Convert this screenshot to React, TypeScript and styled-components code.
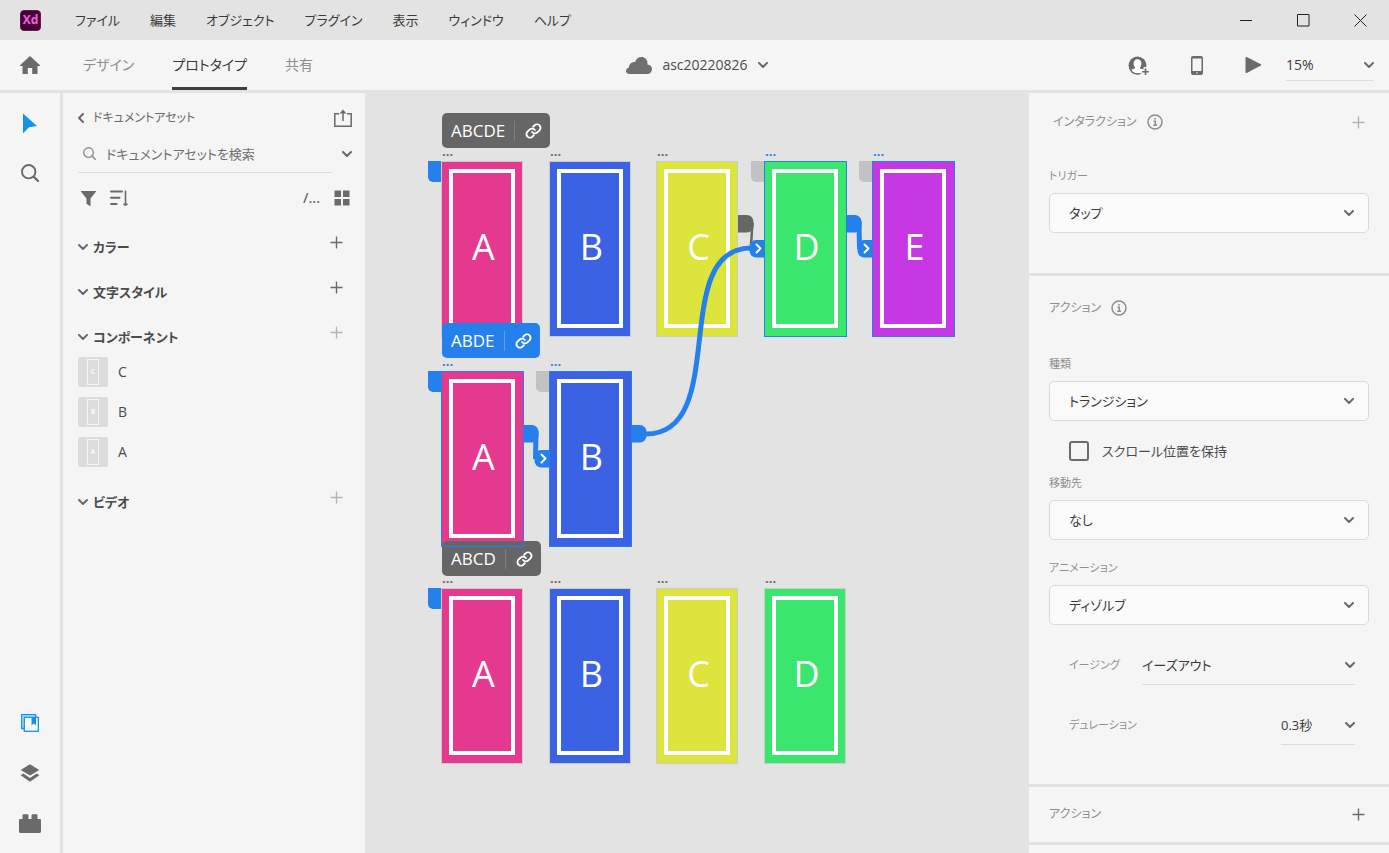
import React from "react";
import styled, { createGlobalStyle, css } from "styled-components";

const color = {
  frame: "#e3e3e3",
  panel: "#f5f5f5",
  line: "#e1e1e1",
  text: "#4b4b4b",
  strong: "#3a3a3a",
  muted: "#8e8e8e",
  faint: "#b3b3b3",
  icon: "#6a6a6a",
  blue: "#2680eb",
  pink: "#e4398f",
  royal: "#3a62e3",
  yellow: "#dde43c",
  green: "#3be66f",
  purple: "#c538e3",
};

const GlobalStyle = createGlobalStyle`
  *, *::before, *::after { box-sizing: border-box; }
  body {
    margin: 0;
    background: ${color.frame};
    color: ${color.text};
    font-family: "Open Sans", "Noto Sans CJK JP", sans-serif;
    font-feature-settings: "palt";
    font-size: 13px;
    line-height: 20px;
  }
  button, input, select {
    font: inherit;
    font-feature-settings: inherit;
    color: inherit;
    margin: 0;
  }
  button {
    display: inline-flex;
    align-items: center;
    justify-content: center;
    padding: 0;
    border: 0;
    background: none;
  }
  svg { display: block; flex: none; }
`;

/* ---------- shell ---------- */

const Shell = styled.div`
  display: flex;
  flex-direction: column;
  min-height: 100vh;
`;

const TitleBar = styled.header`
  display: flex;
  align-items: center;
  height: 40px;
  padding-left: 20px;
`;

const Logo = styled.div`
  display: flex;
  align-items: center;
  justify-content: center;
  width: 21px;
  height: 21px;
  border: 1px solid #6b1458;
  border-radius: 4px;
  background: #450135;
  color: #f45fe8;
  font-size: 12px;
  font-weight: 700;
  line-height: 16px;
`;

const Menu = styled.nav`
  display: flex;
  flex: 1;
  gap: 30px;
  margin-left: 34px;
  color: ${color.strong};
`;

const WindowButton = styled.button`
  width: 57px;
  height: 40px;
`;

const ToolBar = styled.div`
  display: grid;
  grid-template-columns: 1fr auto 1fr;
  height: 50px;
  margin-bottom: 3px;
  padding: 0 15px 0 20px;
  background: ${color.panel};
`;

const ToolGroup = styled.div<{ $end?: boolean; $gap: number }>`
  display: flex;
  align-items: center;
  justify-content: ${(p) => (p.$end ? "flex-end" : "flex-start")};
  gap: ${(p) => p.$gap}px;
`;

const Tab = styled.button<{ $active?: boolean }>`
  height: 50px;
  border-bottom: 3px solid ${(p) => (p.$active ? "#404040" : "transparent")};
  border-top: 3px solid transparent;
  color: ${(p) => (p.$active ? color.strong : color.muted)};
  font-size: 14px;
`;

const DocButton = styled.button`
  gap: 10px;
  color: ${color.text};
  font-size: 14px;
`;

const SelectWrap = styled.div`
  display: grid;
  align-items: center;
  flex: 1;
  > * { grid-area: 1 / 1; }
  > svg { justify-self: end; pointer-events: none; }
`;

const selectBase = css`
  width: 100%;
  height: 40px;
  appearance: none;
  border-radius: 0;
  background: transparent;
  color: ${color.strong};
`;

const BoxSelect = styled.select`
  ${selectBase}
  padding: 0 40px 0 19px;
  border: 1px solid #dadada;
  border-radius: 5px;
  background: #fafafa;
  & + svg { margin-right: 15px; }
`;

const LineSelect = styled.select`
  ${selectBase}
  padding: 0;
  border: 0;
  border-bottom: 1px solid #dcdcdc;
`;

const ZoomBox = styled.div`
  display: flex;
  width: 88px;
  height: 32px;
  font-size: 14px;
  select { height: 32px; }
`;

const Body = styled.div`
  display: flex;
  flex: 1;
`;

/* ---------- left side ---------- */

const Rail = styled.nav`
  display: flex;
  flex-direction: column;
  justify-content: space-between;
  width: 63px;
  padding: 5px 0;
  border-right: 3px solid ${color.line};
  background: ${color.panel};
  color: ${color.icon};
`;

const RailButton = styled.button`
  display: flex;
  width: 60px;
  height: 50px;
`;

const Assets = styled.aside`
  width: 303px;
  padding: 7px 13px 0 15px;
  border-right: 1px solid ${color.line};
  background: ${color.panel};
`;

const AssetRow = styled.div<{ $h: number }>`
  display: flex;
  align-items: center;
  justify-content: space-between;
  height: ${(p) => p.$h}px;
`;

const BackButton = styled.button`
  gap: 9px;
  color: ${color.icon};
  font-size: 12px;
`;

const SearchBox = styled.label`
  display: flex;
  align-items: center;
  gap: 10px;
  width: 254px;
  height: 38px;
  padding-left: 5px;
  border-bottom: 1px solid #dcdcdc;
  color: ${color.muted};
  input {
    flex: 1;
    min-width: 0;
    padding: 0;
    border: 0;
    outline: 0;
    background: transparent;
  }
  input::placeholder { color: #6e6e6e; opacity: 1; }
`;

const IconSet = styled.div`
  display: flex;
  align-items: center;
  gap: 14px;
  padding: 0 2px 0 3px;
  color: ${color.icon};
  font-size: 14px;
  font-weight: 600;
`;

const AssetGroups = styled.div`
  display: flex;
  flex-direction: column;
  gap: 15px;
  margin-top: 9px;
`;

const GroupHead = styled.div`
  display: flex;
  justify-content: space-between;
  height: 30px;
  padding-right: 9px;
`;

const GroupToggle = styled.button`
  gap: 5px;
  font-weight: 700;
  color: ${color.text};
`;

const AddButton = styled.button<{ $dim?: boolean }>`
  width: 13px;
  height: 20px;
  color: ${(p) => (p.$dim ? color.faint : color.icon)};
`;

const ComponentList = styled.ul`
  margin: 0;
  padding: 0;
  list-style: none;
  font-size: 14px;
`;

const ComponentItem = styled.li`
  display: flex;
  align-items: center;
  gap: 10px;
  height: 40px;
`;

const Thumb = styled.span`
  display: flex;
  justify-content: center;
  width: 30px;
  height: 30px;
  padding: 2px 0;
  border-radius: 2px;
  background: #dcdcdc;
  span {
    display: flex;
    align-items: center;
    justify-content: center;
    width: 12px;
    border: 1px solid #f5f5f5;
    color: #fafafa;
    font-size: 7px;
    font-weight: 700;
    line-height: 8px;
  }
`;

/* ---------- canvas ---------- */

const Canvas = styled.main`
  position: relative;
  flex: 1;
  min-width: 600px;
  overflow: hidden;
`;

const Placed = styled.div.attrs<{ $x: number; $y: number }>((p) => ({
  style: { left: p.$x, top: p.$y },
}))<{ $x: number; $y: number }>`
  position: absolute;
`;

const Board = styled(Placed)<{ $fill: string; $selected?: boolean }>`
  width: ${(p) => (p.$selected ? 83 : 82)}px;
  height: 176px;
  padding: 7px;
  border: 1px solid #cbcbcb;
  background: ${(p) => p.$fill};
`;

const Selection = styled(Placed)`
  width: 83px;
  height: 176px;
  border: 1px solid ${color.blue};
`;

const BoardFrame = styled.div`
  display: flex;
  align-items: center;
  justify-content: center;
  width: 66px;
  height: 159px;
  padding: 0 0 3px 3px;
  border: 4px solid #fff;
  color: #fff;
  font-size: 36px;
  line-height: 40px;
`;

const BoardName = styled(Placed)<{ $selected?: boolean }>`
  color: ${(p) => (p.$selected ? color.blue : color.icon)};
  font-size: 13px;
  font-weight: 700;
  line-height: 16px;
`;

const HomeTab = styled(Placed)<{ $on?: boolean }>`
  width: 13px;
  height: 21px;
  border-bottom-left-radius: 5px;
  background: ${(p) => (p.$on ? color.blue : "#c2c2c2")};
`;

const FlowTag = styled(Placed)<{ $on?: boolean }>`
  display: flex;
  align-items: center;
  height: 35px;
  padding: 0 8px 0 9px;
  border-radius: 5px;
  background: ${(p) => (p.$on ? color.blue : "#666")};
  color: #fff;
  font-size: 17px;
  svg {
    width: 28px;
    height: 20px;
    margin-left: 9px;
    padding-left: 10px;
    border-left: 1px solid ${(p) => (p.$on ? "#5c9fee" : "#808080")};
  }
`;

const Wires = styled.svg`
  position: absolute;
  inset: 0;
  pointer-events: none;
`;

/* ---------- inspector ---------- */

const Inspector = styled.aside`
  width: 360px;
  background: ${color.panel};
`;

const Section = styled.section<{ $top: number; $bottom: number }>`
  padding: ${(p) => `${p.$top}px 20px ${p.$bottom}px`};
  border-bottom: 3px solid ${color.line};
`;

const SectionHead = styled.div<{ $indent?: boolean }>`
  display: flex;
  align-items: center;
  justify-content: space-between;
  height: 32px;
  padding: 0 4px 0 ${(p) => (p.$indent ? 4 : 0)}px;
`;

const SectionTitle = styled.h2`
  display: flex;
  align-items: center;
  gap: 10px;
  margin: 0;
  color: ${color.muted};
  font-size: 12px;
  font-weight: 400;
`;

const Field = styled.div<{ $gap: number }>`
  display: flex;
  flex-direction: column;
  gap: 7px;
  margin-top: ${(p) => p.$gap}px;
  label {
    color: ${color.muted};
    font-size: 11px;
  }
`;

const CheckRow = styled.label`
  display: flex;
  align-items: center;
  gap: 13px;
  height: 30px;
  margin: 15px 0 7px 20px;
  input {
    appearance: none;
    width: 20px;
    height: 20px;
    border: 2px solid ${color.icon};
    border-radius: 3px;
  }
`;

const InlineField = styled.div<{ $w: number }>`
  display: flex;
  align-items: center;
  justify-content: space-between;
  height: 40px;
  margin: 20px 14px 0 20px;
  label {
    color: ${color.muted};
    font-size: 11px;
  }
  > div {
    flex: none;
    width: ${(p) => p.$w}px;
  }
`;

/* ---------- icons ---------- */

const Chevron = ({ left }: { left?: boolean }) => (
  <svg width={left ? 6 : 10} height={left ? 10 : 6} viewBox={left ? "0 0 6 10" : "0 0 10 6"} fill="none" stroke={color.icon} strokeWidth="2" strokeLinecap="round" strokeLinejoin="round">
    <path d={left ? "M5 1 1 5l4 4" : "m1 1 4 4 4-4"} />
  </svg>
);

const Plus = () => (
  <svg width="13" height="13" viewBox="0 0 13 13" stroke="currentColor" strokeWidth="1.4">
    <path d="M6.5 .5v12M.5 6.5h12" />
  </svg>
);

const Info = () => (
  <svg width="16" height="16" viewBox="0 0 16 16" fill="none" stroke={color.muted} strokeWidth="1.5">
    <circle cx="8" cy="8" r="7" />
    <path d="M6.5 7.2h1.8v3.9M6.2 11.3h3.8" />
    <circle cx="8" cy="4.8" r=".6" fill={color.muted} strokeWidth=".8" />
  </svg>
);

const HomeIcon = () => (
  <svg width="20" height="18" viewBox="0 0 20 18" fill={color.icon}>
    <path d="M10 0 20 9.2c.3.3.1.8-.3.8H17.500v7.200c0 .5-.3.8-.8.8H12.200v-6H7.800v6H3.300c-.5 0-.8-.3-.8-.8V10H.3c-.4 0-.5-.5-.3-.8z" />
  </svg>
);

const CloudIcon = () => (
  <svg width="26" height="17" viewBox="0 0 26 17" fill="#707070">
    <path d="M3.600 17C1.600 17 0 15.700 0 13.900c0-1.700 1.300-2.900 2.900-3.100C2.900 7.300 5.200 5 8 4.900h1.200C10 2 12.500 0 15.300 0c3.500 0 6.200 2.700 6.200 6.200 0 .4 0 .8-.1 1.200 2.600.1 4.600 2 4.600 4.600C26 14.800 24 17 21.200 17z" />
  </svg>
);

const UserIcon = () => (
  <svg width="21" height="19" viewBox="0 0 21 19">
    <circle cx="9.500" cy="9.500" r="9" fill={color.icon} />
    <path d="M9.500 3.200c2.500 0 3.900 1.800 3.900 4.200 0 1.700-.7 2.900-1.300 3.800-.2.400-.2 1 .3 1.200l3 1.200-1 2.100c-1.300 1.100-3 1.700-4.900 1.700s-3.600-.6-4.900-1.700l-1-2.100 3-1.200c.5-.2.5-.8.300-1.200-.6-.9-1.300-2.100-1.300-3.800 0-2.400 1.400-4.200 3.900-4.200z" fill="#fff" />
    <path d="M3.200 15.500C5 17.300 7.200 18 9.500 18c1 0 2-.2 2.900-.5" fill="none" stroke={color.icon} strokeWidth="1.200" />
    <path d="M17.500 11v9M12.500 15.500H22" stroke={color.panel} strokeWidth="4" />
    <path d="M17.500 12.500v6.500M14.200 15.700h6.600" stroke={color.icon} strokeWidth="1.600" />
  </svg>
);

const PhoneIcon = () => (
  <svg width="12" height="19" viewBox="0 0 12 19">
    <rect width="12" height="19" rx="2" fill={color.icon} />
    <rect x="1.500" y="2.500" width="9" height="12.500" fill={color.panel} />
    <circle cx="6" cy="17" r=".8" fill={color.panel} />
  </svg>
);

const PlayIcon = () => (
  <svg width="17" height="18" viewBox="0 0 17 18" fill={color.icon}>
    <path d="M.5 1.700C.5 1 1.200.7 1.800 1l14 7.300c.5.3.5.9 0 1.200L1.800 17c-.6.3-1.300 0-1.300-.7z" />
  </svg>
);

const CursorIcon = () => (
  <svg width="14" height="21" viewBox="0 0 14 21" fill="#1592e6">
    <path d="M0 .5V20.500L6 14.300 14 13z" />
  </svg>
);

const SearchIcon = ({ size }: { size: number }) => (
  <svg width={size} height={size} viewBox="0 0 18 18" fill="none" stroke="currentColor" strokeWidth="1.900" strokeLinecap="round">
    <circle cx="7.700" cy="7.700" r="6.700" />
    <path d="m12.800 12.800 4.200 4.200" strokeWidth="2.300" />
  </svg>
);

const LibraryIcon = () => (
  <svg width="18" height="18" viewBox="0 0 18 18">
    <path d="M3 14.500H.7V.7h14v2.300" fill="#bfdff7" stroke="#1592e6" strokeWidth="1.300" />
    <rect x="3.300" y="3.300" width="14" height="14" fill="#f8fbfe" stroke="#1592e6" strokeWidth="1.300" />
    <path d="M10.500 3.500h4.500V11.500l-2.250-2-2.250 2z" fill="#1592e6" />
  </svg>
);

const LayersIcon = () => (
  <svg width="20" height="18" viewBox="0 0 20 18" fill={color.icon}>
    <path d="M10 .3 19.300 5.900 10 11.500.7 5.900z" />
    <path d="M3.300 9.600.7 11.200 10 17.700l9.300-6.500-2.600-1.600L10 14z" />
  </svg>
);

const PluginIcon = () => (
  <svg width="22" height="19" viewBox="0 0 22 19" fill={color.icon}>
    <path d="M1.200 5H3.500V1.500c0-.8.5-1.300 1.300-1.300h3.400c.8 0 1.300.5 1.300 1.300V5h3V1.500c0-.8.5-1.300 1.300-1.300h3.400c.8 0 1.300.5 1.300 1.300V5h2.300c.7 0 1.200.5 1.200 1.200v11.600c0 .7-.5 1.200-1.200 1.200H1.200C.5 19 0 18.500 0 17.800V6.200C0 5.500.5 5 1.200 5z" />
  </svg>
);

const ShareIcon = () => (
  <svg width="18" height="18" viewBox="0 0 18 18" fill="none" stroke={color.icon} strokeWidth="1.500">
    <path d="M5 4.800H.8v12.400h16.400V4.800H13M9 12V2" />
    <path d="M5.500 4.500 9 .6l3.500 3.900z" fill={color.icon} stroke="none" />
  </svg>
);

const FilterIcon = () => (
  <svg width="15" height="15" viewBox="0 0 15 15" fill={color.icon}>
    <path d="M.4 0h14.200c.4 0 .5.4.3.7L9.500 7.500v7c0 .5-.4.6-.7.4l-3-1.900c-.2-.1-.3-.3-.3-.5v-5L.1.700C-.1.400 0 0 .4 0z" />
  </svg>
);

const SortIcon = () => (
  <svg width="18" height="17" viewBox="0 0 18 17" fill="none" stroke={color.icon} strokeWidth="2" strokeLinecap="round">
    <path d="M1 1.500h11M1 7.800h8.500M1 14h5.500" />
    <path d="M15.500.5v14" strokeWidth="1.600" strokeLinecap="butt" />
    <path d="m13.500 14 2 2 2-2z" fill={color.icon} strokeWidth="1" strokeLinecap="butt" />
  </svg>
);

const GridIcon = () => (
  <svg width="16" height="16" viewBox="0 0 16 16" fill={color.icon}>
    <path d="M.5.500h6.500v6.500H.500zM9 .500h6.500v6.500H9zM.500 9h6.500v6.500H.500zM9 9h6.500v6.500H9z" />
  </svg>
);

const LinkIcon = () => (
  <svg viewBox="0 0 24 24" fill="none" stroke="#fff" strokeWidth="2.600" strokeLinecap="round" strokeLinejoin="round">
    <path d="M10 13.500a5 5 0 0 0 7.500.5l3-3a4.900 4.900 0 0 0-7-7l-2 2" />
    <path d="M14 10.500a5 5 0 0 0-7.500-.5l-3 3a4.900 4.900 0 0 0 7 7l2-2" />
  </svg>
);

/* ---------- data ---------- */

const menuItems = ["ファイル", "編集", "オブジェクト", "プラグイン", "表示", "ウィンドウ", "ヘルプ"];

const fills: Record<string, string> = {
  A: color.pink,
  B: color.royal,
  C: color.yellow,
  D: color.green,
  E: color.purple,
};

const columnX: Record<string, number> = { A: 75, B: 183, C: 290, D: 398, E: 506 };

const flows = [
  { name: "ABCDE", tagY: 20, y: 68, boards: "ABCDE", selected: "DE", home: ["A"], hints: ["D", "E"], on: false },
  { name: "ABDE", tagY: 230, y: 278, boards: "AB", selected: "AB", home: ["A"], hints: ["B"], on: true },
  { name: "ABCD", tagY: 448, y: 495, boards: "ABCD", selected: "", home: ["A"], hints: [], on: false },
];

/* ---------- parts ---------- */

const OutPort = ({ x, y, fill = color.blue }: { x: number; y: number; fill?: string }) => (
  <path d={`M${x} ${y}h9a6.500 6.500 0 0 1 6.500 6.500v4.500a6.500 6.500 0 0 1-6.500 6.500h-9z`} fill={fill} />
);

const InPort = ({ x, y }: { x: number; y: number }) => (
  <g>
    <path d={`M${x} ${y}h-9a6.500 6.500 0 0 0-6.500 6.500v4.500a6.500 6.500 0 0 0 6.500 6.500h9z`} fill={color.blue} />
    <path d={`m${x - 8.500} ${y + 4.500} 4 4-4 4`} fill="none" stroke="#fff" strokeWidth="2" strokeLinecap="round" strokeLinejoin="round" />
  </g>
);

const Dropdown = ({ id, value, line, label }: { id: string; value: string; line?: boolean; label?: string }) => (
  <SelectWrap>
    {line ? (
      <LineSelect id={id} defaultValue={value} aria-label={label}>
        <option>{value}</option>
      </LineSelect>
    ) : (
      <BoxSelect id={id} defaultValue={value} aria-label={label}>
        <option>{value}</option>
      </BoxSelect>
    )}
    <Chevron />
  </SelectWrap>
);

const LabeledDropdown = ({ id, label, value, gap }: { id: string; label: string; value: string; gap: number }) => (
  <Field $gap={gap}>
    <label htmlFor={id}>{label}</label>
    <Dropdown id={id} value={value} />
  </Field>
);

const Group = ({ title, dim, children }: { title: string; dim?: boolean; children?: React.ReactNode }) => (
  <section>
    <GroupHead>
      <GroupToggle>
        <Chevron />
        {title}
      </GroupToggle>
      <AddButton $dim={dim} aria-label={`${title}を追加`}>
        <Plus />
      </AddButton>
    </GroupHead>
    {children}
  </section>
);

export default function App() {
  return (
    <Shell>
      <GlobalStyle />
      <TitleBar>
        <Logo>Xd</Logo>
        <Menu>
          {menuItems.map((item) => (
            <button key={item}>{item}</button>
          ))}
        </Menu>
        <WindowButton aria-label="最小化">
          <svg width="13" height="13" viewBox="0 0 13 13" stroke="#222">
            <path d="M0 6.500h12" />
          </svg>
        </WindowButton>
        <WindowButton aria-label="最大化">
          <svg width="13" height="13" viewBox="0 0 13 13" stroke="#222" fill="none">
            <path d="M.5.500h11.500v11.500H.500z" />
          </svg>
        </WindowButton>
        <WindowButton aria-label="閉じる">
          <svg width="13" height="13" viewBox="0 0 13 13" stroke="#222">
            <path d="m.5.500 12 12m0-12-12 12" />
          </svg>
        </WindowButton>
      </TitleBar>

      <ToolBar>
        <ToolGroup $gap={43}>
          <button aria-label="ホーム">
            <HomeIcon />
          </button>
          <ToolGroup $gap={38}>
            <Tab>デザイン</Tab>
            <Tab $active>プロトタイプ</Tab>
            <Tab>共有</Tab>
          </ToolGroup>
        </ToolGroup>
        <DocButton>
          <CloudIcon />
          asc20220826
          <Chevron />
        </DocButton>
        <ToolGroup $end $gap={42}>
          <button aria-label="招待">
            <UserIcon />
          </button>
          <button aria-label="モバイルプレビュー">
            <PhoneIcon />
          </button>
          <ToolGroup $gap={24}>
            <button aria-label="再生">
              <PlayIcon />
            </button>
            <ZoomBox>
              <Dropdown id="zoom" value="15%" label="表示倍率" line />
            </ZoomBox>
          </ToolGroup>
        </ToolGroup>
      </ToolBar>

      <Body>
        <Rail>
          <div>
            <RailButton aria-label="選択">
              <CursorIcon />
            </RailButton>
            <RailButton aria-label="ズーム">
              <SearchIcon size={18} />
            </RailButton>
          </div>
          <div>
            <RailButton aria-label="ライブラリ">
              <LibraryIcon />
            </RailButton>
            <RailButton aria-label="レイヤー">
              <LayersIcon />
            </RailButton>
            <RailButton aria-label="プラグイン">
              <PluginIcon />
            </RailButton>
          </div>
        </Rail>

        <Assets>
          <AssetRow $h={35}>
            <BackButton>
              <Chevron left />
              ドキュメントアセット
            </BackButton>
            <button aria-label="共有">
              <ShareIcon />
            </button>
          </AssetRow>
          <AssetRow $h={38}>
            <SearchBox>
              <SearchIcon size={13} />
              <input placeholder="ドキュメントアセットを検索" aria-label="検索" />
            </SearchBox>
            <button aria-label="検索範囲">
              <Chevron />
            </button>
          </AssetRow>
          <AssetRow $h={50}>
            <IconSet>
              <FilterIcon />
              <SortIcon />
            </IconSet>
            <IconSet>
              <span>/...</span>
              <GridIcon />
            </IconSet>
          </AssetRow>
          <AssetGroups>
            <Group title="カラー" />
            <Group title="文字スタイル" />
            <Group title="コンポーネント" dim>
              <ComponentList>
                {["C", "B", "A"].map((name) => (
                  <ComponentItem key={name}>
                    <Thumb aria-hidden>
                      <span>{name}</span>
                    </Thumb>
                    {name}
                  </ComponentItem>
                ))}
              </ComponentList>
            </Group>
            <Group title="ビデオ" dim />
          </AssetGroups>
        </Assets>

        <Canvas>
          {flows.map((flow) => (
            <React.Fragment key={flow.name}>
              {flow.home.map((b) => (
                <HomeTab key={b} $on $x={columnX[b] - 13} $y={flow.y} />
              ))}
              {flow.hints.map((b) => (
                <HomeTab key={b} $x={columnX[b] - 13} $y={flow.y} />
              ))}
              {flow.boards.split("").map((b) => (
                <React.Fragment key={b}>
                  <BoardName $x={columnX[b] + 1} $y={flow.y - 18} $selected={flow.selected.includes(b)}>
                    ...
                  </BoardName>
                  <Board $x={columnX[b]} $y={flow.y} $fill={fills[b]} $selected={flow.selected.includes(b)}>
                    <BoardFrame>{b}</BoardFrame>
                  </Board>
                </React.Fragment>
              ))}
              <FlowTag $x={76} $y={flow.tagY} $on={flow.on}>
                {flow.name}
                <LinkIcon />
              </FlowTag>
            </React.Fragment>
          ))}
          {flows.map((flow) =>
            flow.selected.split("").map((b) => <Selection key={flow.name + b} $x={columnX[b]} $y={flow.y} />)
          )}
          <Wires width="100%" height="100%">
            <path d="M386.500 130L385 152" fill="none" stroke="#666" strokeWidth="2.500" />
            <path d="M280 341C365 341 302 155 385 155" fill="none" stroke={color.blue} strokeWidth="5" />
            <path d="M493 128L493.500 156M170 338L169.500 366" fill="none" stroke={color.blue} strokeWidth="5" />
            <OutPort x={372} y={122} fill="#666" />
            <OutPort x={480} y={122} />
            <OutPort x={157} y={332} />
            <OutPort x={265} y={332} />
            <InPort x={399} y={147} />
            <InPort x={507} y={147} />
            <InPort x={184} y={357} />
          </Wires>
        </Canvas>

        <Inspector>
          <Section $top={13} $bottom={40}>
            <SectionHead $indent>
              <SectionTitle>
                インタラクション
                <Info />
              </SectionTitle>
              <AddButton $dim aria-label="インタラクションを追加">
                <Plus />
              </AddButton>
            </SectionHead>
            <LabeledDropdown id="trigger" label="トリガー" value="タップ" gap={28} />
          </Section>
          <Section $top={16} $bottom={39}>
            <SectionHead>
              <SectionTitle>
                アクション
                <Info />
              </SectionTitle>
            </SectionHead>
            <LabeledDropdown id="type" label="種類" value="トランジション" gap={30} />
            <CheckRow>
              <input type="checkbox" />
              スクロール位置を保持
            </CheckRow>
            <LabeledDropdown id="target" label="移動先" value="なし" gap={0} />
            <LabeledDropdown id="animation" label="アニメーション" value="ディゾルブ" gap={18} />
            <InlineField $w={213}>
              <label htmlFor="easing">イージング</label>
              <Dropdown id="easing" value="イーズアウト" line />
            </InlineField>
            <InlineField $w={74}>
              <label htmlFor="duration">デュレーション</label>
              <Dropdown id="duration" value="0.3秒" line />
            </InlineField>
          </Section>
          <Section $top={11} $bottom={12}>
            <SectionHead>
              <SectionTitle>アクション</SectionTitle>
              <AddButton aria-label="アクションを追加">
                <Plus />
              </AddButton>
            </SectionHead>
          </Section>
        </Inspector>
      </Body>
    </Shell>
  );
}
